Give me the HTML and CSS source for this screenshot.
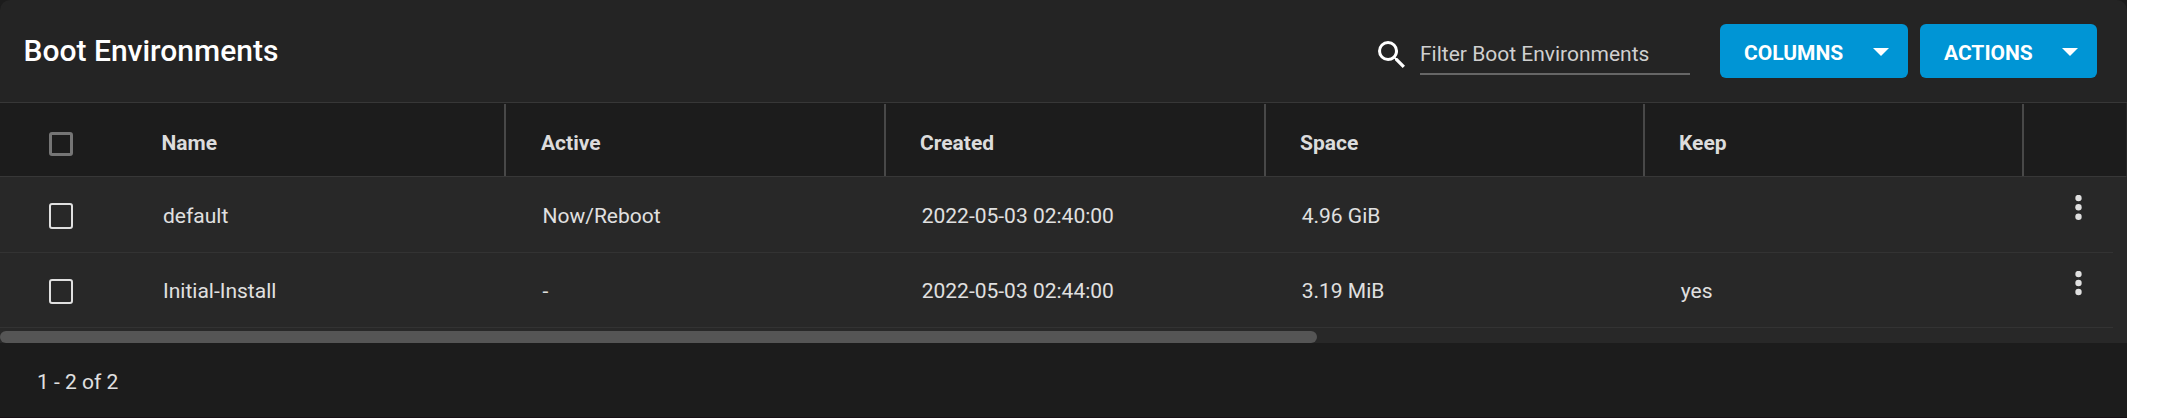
FILE: index.html
```html
<!DOCTYPE html>
<html lang="en">
<head>
<meta charset="utf-8">
<title>Boot Environments</title>
<link rel="stylesheet" href="styles.css">
</head>
<body>
<div class="page">
<main class="card">
  <header class="toolbar">
    <h1 class="title">Boot Environments</h1>
    <div class="search">
      <svg class="search-icon" viewBox="3 3 17.5 17.5"><path d="M9.5 3A6.5 6.5 0 0 1 16 9.5c0 1.61-.59 3.09-1.56 4.23l.27.27h.79l5 5-1.5 1.5-5-5v-.79l-.27-.27A6.52 6.52 0 0 1 9.5 16a6.5 6.5 0 0 1 0-13m0 2C7 5 5 7 5 9.5S7 14 9.5 14 14 12 14 9.5 12 5 9.5 5z"/></svg>
      <input class="filter" type="text" placeholder="Filter Boot Environments">
    </div>
    <button class="button columns">COLUMNS<span class="caret"></span></button>
    <button class="button actions">ACTIONS<span class="caret"></span></button>
  </header>
  <div class="row head">
    <div class="check"><span class="box"></span></div>
    <div class="cell first">Name</div>
    <div class="cell">Active</div>
    <div class="cell">Created</div>
    <div class="cell">Space</div>
    <div class="cell">Keep</div>
    <div class="menu"></div>
  </div>
  <div class="body">
    <div class="row item">
      <div class="check"><span class="box"></span></div>
      <div class="cell first">default</div>
      <div class="cell">Now/Reboot</div>
      <div class="cell">2022-05-03 02:40:00</div>
      <div class="cell">4.96 GiB</div>
      <div class="cell"></div>
      <div class="menu"><svg class="dots" viewBox="0 0 7 25"><circle cx="3.5" cy="3" r="3.2"/><circle cx="3.5" cy="12.2" r="3.2"/><circle cx="3.5" cy="21.8" r="3.2"/></svg></div>
    </div>
    <div class="row item last">
      <div class="check"><span class="box"></span></div>
      <div class="cell first">Initial-Install</div>
      <div class="cell">-</div>
      <div class="cell">2022-05-03 02:44:00</div>
      <div class="cell">3.19 MiB</div>
      <div class="cell">yes</div>
      <div class="menu"><svg class="dots" viewBox="0 0 7 25"><circle cx="3.5" cy="3" r="3.2"/><circle cx="3.5" cy="12" r="3.2"/><circle cx="3.5" cy="21" r="3.2"/></svg></div>
    </div>
    <div class="scrollbar"><div class="thumb"></div></div>
  </div>
  <footer class="footer">1 - 2 of 2</footer>
</main>
</div>
</body>
</html>
```
FILE: styles.css
```css
* { box-sizing: border-box; }

body {
  margin: 0;
  background: #fff;
  font-family: Roboto, "Liberation Sans", sans-serif;
  font-size: 21px;
  color: #e0e0e0;
}

.page {
  width: 2127px;
  height: 418px;
  background: #1c1c1c;
}

.card {
  display: flex;
  flex-direction: column;
  height: 418px;
  border-radius: 10px 10px 0 0;
  overflow: hidden;
}

.toolbar {
  display: flex;
  align-items: flex-start;
  height: 103px;
  padding: 24px 30px 0 23.5px;
  background: #242424;
  border-bottom: 1px solid #373737;
}

.title {
  flex: 1;
  margin: 0;
  padding-top: 9px;
  font-size: 30px;
  font-weight: 500;
  line-height: 36px;
  color: #fff;
}

.search {
  display: flex;
  margin-right: 30px;
}

.search-icon {
  width: 27px;
  height: 27px;
  margin: 17px 15.5px 0 0;
  fill: #fff;
}

.filter {
  width: 270px;
  height: 51px;
  padding: 10px 0 0;
  border: 0;
  border-bottom: 2px solid #666;
  background: none;
  font: inherit;
  color: #e0e0e0;
  outline: none;
}

.filter::placeholder { color: #d0d0d0; opacity: 1; }

.button {
  display: flex;
  align-items: center;
  justify-content: space-between;
  height: 54px;
  padding: 3px 19px 0 24px;
  border: 0;
  border-radius: 6px;
  background: #0095d5;
  font: 700 21px/24px Roboto, sans-serif;
  color: #fff;
}

.columns { width: 188px; margin-right: 12px; }
.actions { width: 177px; }

.caret {
  margin-bottom: 1px;
  border: 8px solid transparent;
  border-top-color: #fff;
  border-bottom: 0;
}

.row {
  display: grid;
  grid-template-columns: 126px 380px 380px 380px 379px 379px 1fr;
}

.head {
  height: 74px;
  padding-top: 1px;
  background: #1c1c1c;
  border-bottom: 1px solid #373737;
  border-right: 1px solid #282828;
  font-weight: 700;
  line-height: 78px;
  color: #dcdcdc;
}

.head .cell {
  height: 72px;
  padding-left: 34px;
  border-right: 2px solid #484848;
}

.check { padding-left: 49px; }

.box {
  display: block;
  width: 24px;
  height: 26px;
  border: 2px solid #e0e0e0;
  border-radius: 3px;
}

.head .box {
  height: 24px;
  margin-top: 28px;
  border: 3px solid #757575;
}

.body {
  height: 166px;
  background: #282828;
}

.item {
  width: 2113px;
  height: 76px;
  border-bottom: 1px solid #333;
  line-height: 78px;
}

.item .box { margin-top: 26px; }
.item.last { height: 75px; line-height: 76px; }
.item.last .box { height: 25px; }

.item .cell { padding-left: 35.7px; }
.head .first { padding-left: 35.5px; }
.head .first + .cell { padding-left: 35px; }
.item .first { padding-left: 37px; }
.item .first + .cell { padding-left: 36.5px; }

.item .menu { padding: 18px 0 0 51px; }

.dots {
  display: block;
  width: 7px;
  height: 25px;
  fill: #e0e0e0;
}

.scrollbar { padding-top: 3px; }

.thumb {
  width: 1317px;
  height: 12px;
  border-radius: 6px;
  background: #555;
}

.footer {
  height: 75px;
  padding-left: 37px;
  background: #1c1c1c;
  border-bottom: 1px solid #171015;
  line-height: 78px;
}
```
